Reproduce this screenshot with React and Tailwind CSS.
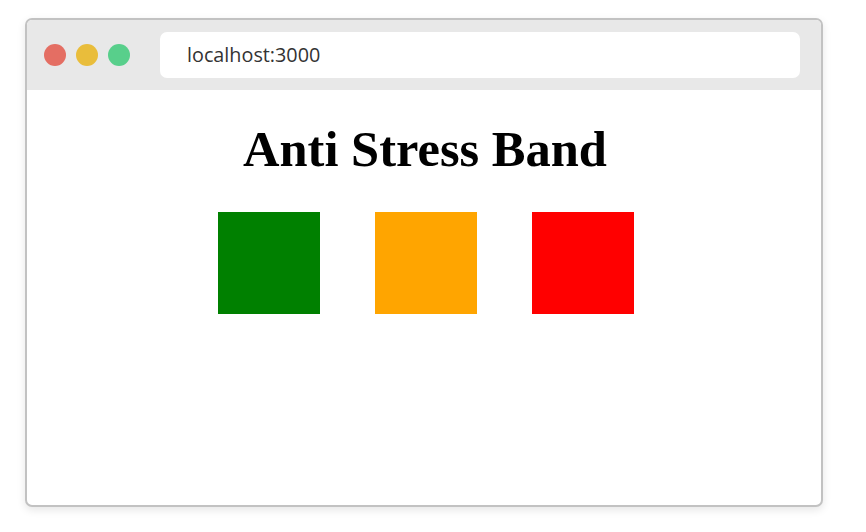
export default function App() {
  return (
    <div className="w-[866px] h-[532px] bg-white pt-[18px] pl-[25px]">
      <div className="w-[798px] h-[489px] border-2 border-[#c2c2c2] rounded-[7px] overflow-hidden bg-white shadow-[0_3px_8px_rgba(0,0,0,0.10)] flex flex-col">
        <div className="h-[70px] bg-[#e8e8e8] flex items-center pl-[17px] pr-[21px]">
          <div className="flex gap-[10px]">
            <div className="w-[22px] h-[22px] rounded-full bg-[#e46e63]" />
            <div className="w-[22px] h-[22px] rounded-full bg-[#e9bd3b]" />
            <div className="w-[22px] h-[22px] rounded-full bg-[#58cf8b]" />
          </div>
          <div className="ml-[30px] flex-1 h-[46px] bg-white rounded-[7px] flex items-center pl-[27px]">
            <span className="text-[19.8px] text-[#333] font-['Open_Sans',sans-serif] leading-none">localhost:3000</span>
          </div>
        </div>
        <div className="flex-1 flex flex-col items-center">
          <h1 className="mt-[31px] text-[50.5px] leading-[57px] font-bold text-black font-['Liberation_Serif','Times_New_Roman',serif] pl-[2px]">
            Anti Stress Band
          </h1>
          <div className="mt-[34px] flex gap-[55px] pl-[4px]">
            <div className="w-[102px] h-[102px] bg-[#008000]" />
            <div className="w-[102px] h-[102px] bg-[#ffa500]" />
            <div className="w-[102px] h-[102px] bg-[#ff0000]" />
          </div>
        </div>
      </div>
    </div>
  );
}
